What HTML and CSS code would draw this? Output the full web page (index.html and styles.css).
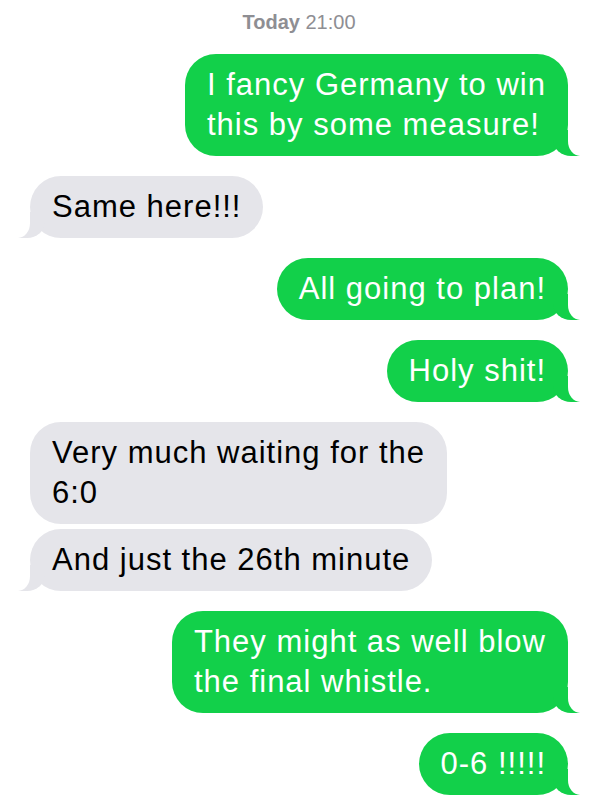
FILE: index.html
```html
<!DOCTYPE html>
<html lang="en">
<head>
<meta charset="utf-8">
<title>Messages</title>
<link rel="stylesheet" href="styles.css">
</head>
<body>
<div class="thread">
  <div class="stamp"><b>Today</b> 21:00</div>
  <div class="msg sent tail first">I fancy Germany to win<br>this by some measure!</div>
  <div class="msg recv tail">Same here!!!</div>
  <div class="msg sent tail">All going to plan!</div>
  <div class="msg sent tail">Holy shit!</div>
  <div class="msg recv">Very much waiting for the<br>6:0</div>
  <div class="msg recv tail grouped">And just the 26th minute</div>
  <div class="msg sent tail">They might as well blow<br>the final whistle.</div>
  <div class="msg sent tail">0-6 !!!!!</div>
</div>
</body>
</html>
```
FILE: styles.css
```css
html, body {
  margin: 0;
  background: #ffffff;
}

.thread {
  display: flex;
  flex-direction: column;
  padding: 10px 31px 0 30px;
  font-family: "Liberation Sans", Arial, sans-serif;
}

.stamp {
  align-self: center;
  font-size: 20px;
  line-height: 24px;
  color: #8e8e93;
}

.stamp b {
  font-weight: bold;
}

.msg {
  position: relative;
  padding: 11px 22px;
  font-size: 31px;
  letter-spacing: 1px;
  line-height: 40px;
  border-radius: 31px;
  margin-top: 20px;
  white-space: nowrap;
}

.msg.grouped {
  margin-top: 5px;
}

.sent {
  align-self: flex-end;
  background: #12d04a;
  color: #ffffff;
}

.recv {
  align-self: flex-start;
  background: #e5e5ea;
  color: #000000;
}

.tail::before,
.tail::after {
  content: "";
  position: absolute;
  bottom: 0;
  height: 26px;
}

.sent.tail::before {
  right: -12px;
  width: 27px;
  background: #12d04a;
  border-bottom-left-radius: 18px 16px;
}

.sent.tail::after {
  right: -15px;
  width: 15px;
  background: #ffffff;
  border-bottom-left-radius: 12px 15px;
}

.recv.tail::before {
  left: -12px;
  width: 27px;
  background: #e5e5ea;
  border-bottom-right-radius: 18px 16px;
}

.recv.tail::after {
  left: -15px;
  width: 15px;
  background: #ffffff;
  border-bottom-right-radius: 12px 15px;
}
```
